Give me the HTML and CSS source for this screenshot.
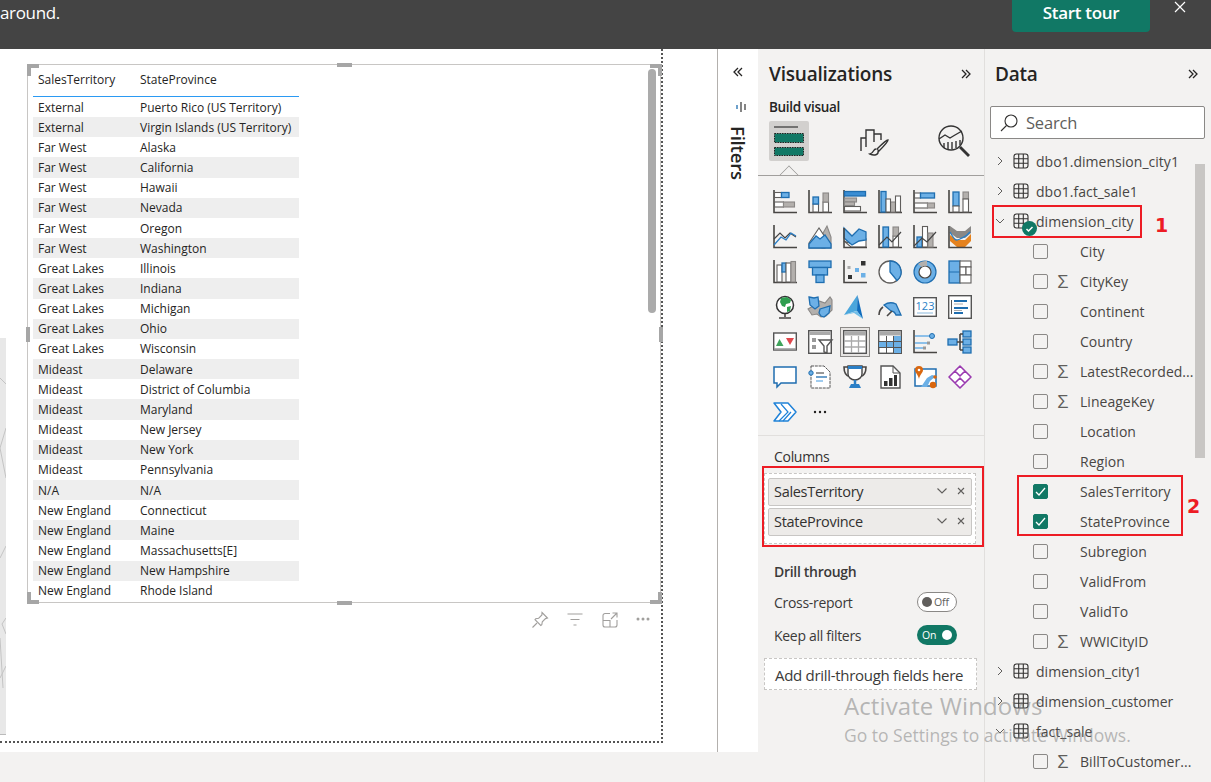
FILE: index.html
```html
<!DOCTYPE html>
<html lang="en">
<head>
<meta charset="utf-8">
<title>Report</title>
<link rel="stylesheet" href="styles.css">
</head>
<body>
<div class="app">
  <header class="banner">
    <span class="banner-text">around.</span>
    <button class="tour">Start tour</button>
    <svg class="banner-x" width="12" height="12" viewBox="0 0 12 12"><path d="M1 1l10 10M11 1L1 11"/></svg>
  </header>
  <div class="main">
    <div class="left">
      <div class="work">
        <div class="canvas-wrap">
          <div class="page">
            <div class="sliver">
              <svg width="6" height="397" viewBox="0 0 6 397"><path d="M0 40l6 6M6 90L0 110l6 30M0 220l6-12M6 280l-4 6 4 10M0 300l3 50M0 340l6-12"/></svg>
            </div>
            <div class="visual">
              <i class="h c-tl"></i><i class="h c-tr"></i><i class="h c-bl"></i><i class="h c-br"></i>
              <i class="h m-t"></i><i class="h m-b"></i><i class="h m-l"></i><i class="h m-r"></i>
              <div class="vscroll"></div>
              <table class="grid">
                <thead><tr><th>SalesTerritory</th><th>StateProvince</th></tr></thead>
                <tbody>
                  <tr><td>External</td><td>Puerto Rico (US Territory)</td></tr>
                  <tr><td>External</td><td>Virgin Islands (US Territory)</td></tr>
                  <tr><td>Far West</td><td>Alaska</td></tr>
                  <tr><td>Far West</td><td>California</td></tr>
                  <tr><td>Far West</td><td>Hawaii</td></tr>
                  <tr><td>Far West</td><td>Nevada</td></tr>
                  <tr><td>Far West</td><td>Oregon</td></tr>
                  <tr><td>Far West</td><td>Washington</td></tr>
                  <tr><td>Great Lakes</td><td>Illinois</td></tr>
                  <tr><td>Great Lakes</td><td>Indiana</td></tr>
                  <tr><td>Great Lakes</td><td>Michigan</td></tr>
                  <tr><td>Great Lakes</td><td>Ohio</td></tr>
                  <tr><td>Great Lakes</td><td>Wisconsin</td></tr>
                  <tr><td>Mideast</td><td>Delaware</td></tr>
                  <tr><td>Mideast</td><td>District of Columbia</td></tr>
                  <tr><td>Mideast</td><td>Maryland</td></tr>
                  <tr><td>Mideast</td><td>New Jersey</td></tr>
                  <tr><td>Mideast</td><td>New York</td></tr>
                  <tr><td>Mideast</td><td>Pennsylvania</td></tr>
                  <tr><td>N/A</td><td>N/A</td></tr>
                  <tr><td>New England</td><td>Connecticut</td></tr>
                  <tr><td>New England</td><td>Maine</td></tr>
                  <tr><td>New England</td><td>Massachusetts[E]</td></tr>
                  <tr><td>New England</td><td>New Hampshire</td></tr>
                  <tr><td>New England</td><td>Rhode Island</td></tr>
                </tbody>
              </table>
            </div>
            <div class="vis-tools">
              <svg width="18" height="18" viewBox="0 0 18 18"><path d="M11 1.500l5.500 5.500-2 .6-3.200 3.200-.5 3-1 .7-5.800-5.800.7-1 3-.5 3.200-3.200zM6 12l-4.500 4.500"/></svg>
              <svg width="18" height="18" viewBox="0 0 18 18"><path d="M1.500 3h15M4.500 8.500h9M7.500 14h3"/></svg>
              <svg width="18" height="18" viewBox="0 0 18 18"><path d="M9 2.500H4a2 2 0 0 0-2 2V14a2 2 0 0 0 2 2h10a2 2 0 0 0 2-2V9M2 9.500h7V16M10 8l6-6M11.500 2H16v4.500"/></svg>
              <svg class="dots" width="14" height="18" viewBox="0 0 14 18"><circle cx="2" cy="8" r="1.500"/><circle cx="7" cy="8" r="1.500"/><circle cx="12" cy="8" r="1.500"/></svg>
            </div>
          </div>
        </div>
        <aside class="filters">
          <svg class="chev" width="12" height="12" viewBox="0 0 12 12"><path d="M6 2L2 6l4 4M10 2L6 6l4 4"/></svg>
          <svg class="filter-ico" width="12" height="12" viewBox="0 0 12 12"><path class="fb" d="M2 4v4"/><path class="fd" d="M6 1v10M10 3v6"/></svg>
          <span class="filters-label">Filters</span>
        </aside>
      </div>
      <div class="status"></div>
    </div>

    <section class="viz">
      <div class="pane-head">
        <h2>Visualizations</h2>
        <svg class="chev" width="12" height="12" viewBox="0 0 12 12"><path d="M2 2l4 4-4 4M6 2l4 4-4 4"/></svg>
      </div>
      <div class="build">Build visual</div>
      <div class="tabs">
        <div class="tab active">
          <svg width="32" height="32" viewBox="0 0 32 32"><path d="M1 2h24" stroke="#333" stroke-width="1.200"/><rect x="1.500" y="8.500" width="29" height="9" fill="#117865" stroke="#222" stroke-dasharray="1.500 1"/><rect x="1.500" y="22.500" width="29" height="8" fill="#117865" stroke="#222" stroke-dasharray="1.500 1"/></svg>
        </div>
        <div class="tab">
          <svg width="32" height="32" viewBox="0 0 32 32" fill="none" stroke="#333" stroke-width="1.400"><path d="M3 26V13h5V5h8v12M16 9h7v6M8 13v9"/><path d="M30 15c-2 0-8 6-11 9l2 2c3-3 9-9 9-11zM18 24c-3 0-2 4-6 5 4 2 9 1 8-3"/></svg>
        </div>
        <div class="tab">
          <svg width="34" height="34" viewBox="0 0 34 34" fill="none" stroke="#333" stroke-width="1.400"><circle cx="14" cy="14" r="12"/><path d="M2 15l6-4 5 3 5-3 7-4M7 19v5M11 18v7M15 18v7M19 17v7M23 16v5"/><path d="M23 23l9 9" stroke-width="2.800"/></svg>
        </div>
      </div>
      <div class="tab-rule"><span class="notch"></span></div>
      <div class="gallery">
        <!-- row 1 -->
        <svg viewBox="0 0 24 24"><path class="ax" d="M1 0v22.500h23"/><rect class="w" x="1.500" y="2.500" width="7" height="5"/><rect class="b" x="8.500" y="2.500" width="7.500" height="5"/><rect class="w" x="1.500" y="12" width="9" height="5"/><rect class="g" x="10.500" y="12" width="11" height="5"/></svg>
        <svg viewBox="0 0 24 24"><path class="ax" d="M1 0v22.500h23"/><rect class="w" x="5" y="14" width="5.500" height="8"/><rect class="b" x="5" y="7" width="5.500" height="7"/><rect class="w" x="15" y="12" width="5.500" height="10"/><rect class="g" x="15" y="3" width="5.500" height="9"/></svg>
        <svg viewBox="0 0 24 24"><path class="ax" d="M1 0v22.500h23"/><rect class="b2" x="1.500" y="1.500" width="21" height="4.500"/><rect class="g" x="1.500" y="8" width="12" height="4"/><rect class="g" x="1.500" y="12" width="10" height="3.500"/><rect class="w" x="1.500" y="16.500" width="16" height="4.500"/></svg>
        <svg viewBox="0 0 24 24"><path class="ax" d="M1 0v22.500h23"/><rect class="b" x="3" y="1.500" width="5" height="20.500"/><rect class="g" x="12.500" y="12" width="5" height="10"/><rect class="w" x="8" y="9" width="4.500" height="13"/><rect class="w" x="17.500" y="6" width="5" height="16"/></svg>
        <svg viewBox="0 0 24 24"><path class="ax" d="M1 0v22.500h23"/><rect class="w" x="1.500" y="3" width="6" height="5"/><rect class="b" x="7.500" y="3" width="14" height="5"/><rect class="w" x="1.500" y="13" width="13" height="5"/><rect class="g" x="14.500" y="13" width="7" height="5"/></svg>
        <svg viewBox="0 0 24 24"><path class="ax" d="M1 0v22.500h23"/><rect class="b" x="5" y="2" width="6" height="14"/><rect class="w" x="5" y="16" width="6" height="6"/><rect class="g" x="15" y="2" width="5.500" height="7"/><rect class="w" x="15" y="9" width="5.500" height="13"/></svg>
        <!-- row 2 -->
        <svg viewBox="0 0 24 24"><path class="ax" d="M1 0v22.500h23"/><path class="ln-d" d="M1 14l6-6 5 5 5-5 6 4"/><path class="ln-b" stroke-width="1.500" d="M1 20l7-8 5 3 5-7 5 3"/></svg>
        <svg viewBox="0 0 24 24"><path class="g" d="M14 23V10l5-9 4 11v11z"/><path class="w" d="M1 18L11 3l6 9v11H1z"/><path class="b" d="M1 23v-4l7-8 4 3 5-4 6 9v4z"/></svg>
        <svg viewBox="0 0 24 24"><path class="w" d="M1 16l7 6h15v-8l-7 1-7 4z"/><path class="b" d="M1 3l8 8 7-7 7 3v8l-7 1-7 4-8-7z"/><path class="ax" d="M1 3v19.500h23"/></svg>
        <svg viewBox="0 0 24 24"><path class="ax" d="M1 0v22.500h23"/><rect class="b" x="5" y="2" width="5.500" height="20"/><rect class="w" x="15" y="11" width="5.500" height="11"/><rect class="g" x="15" y="2" width="5.500" height="9"/><path class="ln-d" d="M1 20l8-8 5 5 9-10"/></svg>
        <svg viewBox="0 0 24 24"><path class="ax" d="M1 0v22.500h23"/><rect class="b" x="4" y="12" width="5" height="10"/><rect class="w" x="9.500" y="1.500" width="5" height="20.500"/><rect class="g" x="15" y="8" width="5" height="14"/><path class="ln-d" d="M1 21l8-8 5 4 9-10"/></svg>
        <svg viewBox="0 0 24 24"><path fill="#8a8886" d="M2 1l7 5h8l6-5v7l-6 5H9L2 8z"/><path fill="#e5821e" d="M2 10l7 5h8l6-6v7l-6 6H9l-7-6z"/><path class="ln-b" stroke-width="3" d="M2 7c5 9 6 9 10 7s6-2 10-7"/><path class="ax" d="M1 1v21.500h23"/></svg>
        <!-- row 3 -->
        <svg viewBox="0 0 24 24"><path class="ax" d="M1 0v22.500h23"/><rect class="w" x="4" y="5" width="5" height="17"/><rect class="b" x="9" y="3" width="4" height="9"/><rect class="w" x="13" y="3" width="5" height="19"/><rect class="g" x="18" y="1.500" width="4.500" height="20.500"/></svg>
        <svg viewBox="0 0 24 24"><rect class="b" x="1" y="1" width="22" height="6.500"/><rect class="b" x="4.500" y="7.500" width="15" height="7.500"/><rect class="b" x="8" y="15" width="8" height="7.500"/></svg>
        <svg viewBox="0 0 24 24"><path class="ax" d="M1 0v22.500h23"/><rect fill="#333" x="18" y="1" width="4.500" height="4.500"/><rect fill="#6cb0e6" x="12" y="8" width="4" height="4"/><rect fill="#aaa" x="4.500" y="6" width="3" height="3"/><rect fill="#6cb0e6" x="18" y="13" width="4.500" height="4.500"/><rect fill="#333" x="5" y="15" width="4" height="4"/></svg>
        <svg viewBox="0 0 24 24"><circle cx="12" cy="12" r="11" fill="#fff" stroke="#605e5c" stroke-width="1.300"/><path class="b" d="M12 12V1a11 11 0 0 1 7 19.500z"/></svg>
        <svg viewBox="0 0 24 24"><circle cx="12" cy="12" r="8.500" fill="none" stroke="#6cb0e6" stroke-width="5"/><circle cx="12" cy="12" r="11" fill="none" stroke="#1f6eb0" stroke-width="1.200"/><circle cx="12" cy="12" r="6" fill="#fff" stroke="#484644" stroke-width="1.200"/><path d="M5 4a11 11 0 0 1 9-3v5a6 6 0 0 0-5 1z" fill="#b3b0ad"/></svg>
        <svg viewBox="0 0 24 24"><rect class="b" x="1" y="1" width="11" height="22"/><path class="b3" d="M1 12h11"/><rect class="w" x="12" y="1" width="11" height="6"/><rect class="w" x="12" y="7" width="6" height="8"/><rect class="w" x="18" y="7" width="5" height="8"/><rect class="w" x="12" y="15" width="11" height="8"/></svg>
        <!-- row 4 -->
        <svg viewBox="0 0 24 24"><circle cx="12" cy="10" r="8.500" fill="#fff" stroke="#333" stroke-width="1.500"/><path fill="#2e9e4f" d="M8 3l6-1 4 3-1 3-4 1-1 3-3-1-2-4zM14 12l4-1-1 5-3 1z"/><path class="ax" d="M12 19v3M6 23h12"/></svg>
        <svg viewBox="0 0 24 24"><path class="g" d="M0 14l7-4 4-4 6 2 5-6 2 3v10l-6 6-5 1-4-3-5 1z"/><path class="b" d="M1 2l5 1 4-1 1 9-4 3-5-4zM12 14l10-3-1 7-5 4-3-1-2-3z"/></svg>
        <svg viewBox="0 0 24 24"><path d="M14.500 0L1 20l9-3 4-1z" fill="#4aa6dc"/><path d="M14.500 0l-.5 16 6 8z" fill="#0f6cbd"/><path d="M1 20l13-4 6 8-9-6z" fill="#70bde8"/></svg>
        <svg viewBox="0 0 24 24"><path class="ax" stroke-width="2" d="M1 20a10 10 0 0 1 4-8"/><path class="b" d="M6 10a12 12 0 0 1 12-1l5 11h-5a6 6 0 0 0-5-4z"/><path class="ax" stroke-width="2.500" d="M9 21l5-5"/></svg>
        <svg viewBox="0 0 24 24"><rect x=".7" y="2.700" width="22.600" height="18.600" fill="#fff" stroke="#555" stroke-width="1.400"/><text x="12" y="15" class="c123">123</text><path d="M4 18h16" stroke="#8ab8dc"/></svg>
        <svg viewBox="0 0 24 24"><rect x=".7" y=".7" width="22.600" height="22.600" fill="#fff" stroke="#555" stroke-width="1.400"/><path d="M6 6h13M6 13h14M6 18h9" stroke="#1f6eb0" stroke-width="1.800"/><path d="M6 9h9M6 15.500h8" stroke="#aaa"/><path d="M3.500 5v14" stroke="#555"/></svg>
        <!-- row 5 -->
        <svg viewBox="0 0 24 24"><rect x=".7" y="3" width="22.600" height="17" fill="#fff" stroke="#555" stroke-width="1.400"/><path d="M6.500 9l4 7H3z" fill="#3fa35b"/><path d="M13 8h8l-4 7z" fill="#e0474c"/><path d="M1 19h22" stroke="#999" stroke-width="1.500"/></svg>
        <svg viewBox="0 0 24 24"><rect x=".7" y=".7" width="22.600" height="22.600" fill="#fff" stroke="#555" stroke-width="1.400"/><path d="M1 3.500h22" stroke="#aaa" stroke-width="3"/><rect x="4" y="8" width="4" height="4" fill="#999"/><rect x="4" y="15" width="4" height="4" fill="#999"/><path d="M11 10h13l-5 6v7l-3-1v-6z" fill="#fff" stroke="#555" stroke-width="1.400"/></svg>
        <span class="sel"><svg viewBox="0 0 24 24"><rect x=".7" y=".7" width="22.600" height="22.600" fill="#fff" stroke="#555" stroke-width="1.400"/><path d="M1 3.500h22" stroke="#aaa" stroke-width="4"/><path d="M1 11h22M1 17h22M8.500 6v17M15.500 6v17" stroke="#aaa" stroke-width="1.300"/></svg></span>
        <svg viewBox="0 0 24 24"><rect x=".7" y=".7" width="22.600" height="22.600" fill="#fff" stroke="#555" stroke-width="1.400"/><path d="M1 3.500h22" stroke="#aaa" stroke-width="4"/><rect x="1" y="12" width="22" height="5" fill="#6cb0e6"/><rect x="16" y="6" width="7" height="17" fill="#6cb0e6"/><path d="M1 11.500h22M1 17.500h22M8.500 6v17M15.500 6v17" stroke="#555"/></svg>
        <svg viewBox="0 0 24 24"><path class="ax" d="M1 0v22.500h23"/><path d="M2 6h16M2 13h12M2 18h8" stroke="#6cb0e6" stroke-width="1.500"/><circle cx="19" cy="6" r="2.500" fill="#6cb0e6" stroke="#1f6eb0"/><rect x="14" y="11.500" width="3" height="3" fill="#999"/><rect x="10" y="16.500" width="3" height="3" fill="#999"/></svg>
        <svg viewBox="0 0 24 24"><rect class="b" x="0" y="9" width="9" height="6"/><rect class="b" x="15" y="1" width="8" height="6"/><rect class="b" x="15" y="9" width="8" height="6"/><rect class="b" x="15" y="17" width="8" height="6"/><path class="ax" d="M9 12h3M12 4v16M12 4h3M12 12h3M12 20h3"/></svg>
        <!-- row 6 -->
        <svg viewBox="0 0 24 24"><path d="M1 2h22v16H8l-4 4v-4H1z" fill="#fff" stroke="#1f6eb0" stroke-width="1.500"/></svg>
        <svg viewBox="0 0 24 24"><path d="M3 1h13l6 6v16H3z" fill="#fff" stroke="#555" stroke-dasharray="3 .8"/><circle cx="3" cy="8" r="2.200" fill="#6cb0e6" stroke="#1f6eb0"/><path d="M8 8h8" stroke="#333"/><path d="M8 12h11" stroke="#1f6eb0" stroke-width="1.300"/><path d="M8 16h7" stroke="#6cb0e6" stroke-width="1.300"/></svg>
        <svg viewBox="0 0 24 24"><path class="ax" stroke-width="1.400" d="M5 2H1c0 6 2 9 6 10M19 2h4c0 6-2 9-6 10"/><path d="M5 1h14v8c0 3-3 6-7 6s-7-3-7-6z" fill="#fff" stroke="#444" stroke-width="1.400"/><path d="M5 1h14v3H5z" fill="#2b7fc6"/><path d="M12 15v4" stroke="#2b7fc6" stroke-width="2.500"/><path d="M6 23l2-4h8l2 4z" fill="#2b7fc6"/></svg>
        <svg viewBox="0 0 24 24"><path d="M3 1h12l7 7v15H3z" fill="#fff" stroke="#555" stroke-width="1.400"/><path d="M15 1v7h7" fill="none" stroke="#555"/><rect x="6" y="16" width="3.500" height="5" fill="#333"/><rect x="11" y="13" width="3.500" height="8" fill="#333"/><rect x="16" y="10" width="3" height="11" fill="#333"/></svg>
        <svg viewBox="0 0 24 24"><path d="M2 4h21v17H2z" fill="#fff" stroke="#1f6eb0" stroke-width="1.500"/><path d="M8 22l6-9 5-3 4 1-6 5-3 6z" fill="#6cb0e6"/><path d="M6 1a4 4 0 0 1 4 4c0 3-3 4-4 9-1-5-4-6-4-9a4 4 0 0 1 4-4z" fill="#d9670f"/><circle cx="6" cy="5" r="1.300" fill="#fff"/><circle cx="20" cy="20" r="3.200" fill="#d9670f"/><circle cx="22" cy="12" r="1.800" fill="#d9670f"/></svg>
        <svg viewBox="0 0 24 24"><path d="M12 1l11 11-11 11L1 12z M7 6l5-5 5 5-5 5z M12 13l5 5-5 5-5-5z" fill="#fff" stroke="#9a3ab0" stroke-width="1.600" stroke-linejoin="round"/></svg>
        <!-- row 7 -->
        <svg viewBox="0 0 24 24"><path d="M1 3h14l8 9-8 9H1l7-9z" fill="#fff" stroke="#1f82d8" stroke-width="1.500" stroke-linejoin="round"/><path d="M6 21L15 12 8 4M10 21l8-9" fill="none" stroke="#1f82d8" stroke-width="1.200"/></svg>
        <svg class="gal-dots" viewBox="0 0 24 24"><circle cx="7" cy="12" r="1.200"/><circle cx="12" cy="12" r="1.200"/><circle cx="17" cy="12" r="1.200"/></svg>
      </div>
      <div class="gal-rule"></div>
      <div class="columns-label">Columns</div>
      <div class="well">
        <div class="pill"><span>SalesTerritory</span><svg class="pc" width="12" height="8" viewBox="0 0 12 8"><path d="M1.500 1.500L6 6l4.500-4.500"/></svg><svg class="px" width="8" height="8" viewBox="0 0 8 8"><path d="M1 1l6 6M7 1L1 7"/></svg></div>
        <div class="pill"><span>StateProvince</span><svg class="pc" width="12" height="8" viewBox="0 0 12 8"><path d="M1.500 1.500L6 6l4.500-4.500"/></svg><svg class="px" width="8" height="8" viewBox="0 0 8 8"><path d="M1 1l6 6M7 1L1 7"/></svg></div>
      </div>
      <div class="drill-title">Drill through</div>
      <div class="opt"><span>Cross-report</span><span class="toggle off"><b></b>Off</span></div>
      <div class="opt"><span>Keep all filters</span><span class="toggle on">On<b></b></span></div>
      <div class="drop">Add drill-through fields here</div>
    </section>

    <section class="data">
      <div class="pane-head">
        <h2>Data</h2>
        <svg class="chev" width="12" height="12" viewBox="0 0 12 12"><path d="M2 2l4 4-4 4M6 2l4 4-4 4"/></svg>
      </div>
      <div class="search">
        <svg width="20" height="20" viewBox="0 0 20 20"><circle cx="12" cy="8" r="6"/><path d="M7.500 12.500L2 18"/></svg>
        <span>Search</span>
      </div>
      <div class="dscroll"></div>
      <div class="tree">
        <div class="t"><svg class="ex" viewBox="0 0 10 10"><path d="M3 1l4 4-4 4"/></svg><svg class="ti" viewBox="0 0 16 16"><rect x="1" y="1" width="14" height="14" rx="2.500"/><path d="M1 5.700h14M1 10.300h14M5.700 1v14M10.300 1v14"/></svg><span>dbo1.dimension_city1</span></div>
        <div class="t"><svg class="ex" viewBox="0 0 10 10"><path d="M3 1l4 4-4 4"/></svg><svg class="ti" viewBox="0 0 16 16"><rect x="1" y="1" width="14" height="14" rx="2.500"/><path d="M1 5.700h14M1 10.300h14M5.700 1v14M10.300 1v14"/></svg><span>dbo1.fact_sale1</span></div>
        <div class="t"><svg class="ex" viewBox="0 0 10 10"><path d="M1 3l4 4 4-4"/></svg><svg class="ti" viewBox="0 0 16 16"><rect x="1" y="1" width="14" height="14" rx="2.500"/><path d="M1 5.700h14M1 10.300h14M5.700 1v14M10.300 1v14"/></svg><svg class="tick" width="15" height="15" viewBox="0 0 15 15"><circle cx="7.500" cy="7.500" r="7.500" fill="#117865"/><path d="M4.500 8l2 2 4-4" fill="none" stroke="#fff" stroke-width="1.500"/></svg><span>dimension_city</span></div>
        <div class="f"><i class="cb"></i><i class="sg"></i><span>City</span></div>
        <div class="f"><i class="cb"></i><i class="sg">Σ</i><span>CityKey</span></div>
        <div class="f"><i class="cb"></i><i class="sg"></i><span>Continent</span></div>
        <div class="f"><i class="cb"></i><i class="sg"></i><span>Country</span></div>
        <div class="f"><i class="cb"></i><i class="sg">Σ</i><span>LatestRecorded...</span></div>
        <div class="f"><i class="cb"></i><i class="sg">Σ</i><span>LineageKey</span></div>
        <div class="f"><i class="cb"></i><i class="sg"></i><span>Location</span></div>
        <div class="f"><i class="cb"></i><i class="sg"></i><span>Region</span></div>
        <div class="f"><i class="cb on"><svg width="11" height="9" viewBox="0 0 11 9"><path d="M1 5l3 3 6-7"/></svg></i><i class="sg"></i><span>SalesTerritory</span></div>
        <div class="f"><i class="cb on"><svg width="11" height="9" viewBox="0 0 11 9"><path d="M1 5l3 3 6-7"/></svg></i><i class="sg"></i><span>StateProvince</span></div>
        <div class="f"><i class="cb"></i><i class="sg"></i><span>Subregion</span></div>
        <div class="f"><i class="cb"></i><i class="sg"></i><span>ValidFrom</span></div>
        <div class="f"><i class="cb"></i><i class="sg"></i><span>ValidTo</span></div>
        <div class="f"><i class="cb"></i><i class="sg">Σ</i><span>WWICityID</span></div>
        <div class="t"><svg class="ex" viewBox="0 0 10 10"><path d="M3 1l4 4-4 4"/></svg><svg class="ti" viewBox="0 0 16 16"><rect x="1" y="1" width="14" height="14" rx="2.500"/><path d="M1 5.700h14M1 10.300h14M5.700 1v14M10.300 1v14"/></svg><span>dimension_city1</span></div>
        <div class="t"><svg class="ex" viewBox="0 0 10 10"><path d="M3 1l4 4-4 4"/></svg><svg class="ti" viewBox="0 0 16 16"><rect x="1" y="1" width="14" height="14" rx="2.500"/><path d="M1 5.700h14M1 10.300h14M5.700 1v14M10.300 1v14"/></svg><span>dimension_customer</span></div>
        <div class="t"><svg class="ex" viewBox="0 0 10 10"><path d="M1 3l4 4 4-4"/></svg><svg class="ti" viewBox="0 0 16 16"><rect x="1" y="1" width="14" height="14" rx="2.500"/><path d="M1 5.700h14M1 10.300h14M5.700 1v14M10.300 1v14"/></svg><span>fact_sale</span></div>
        <div class="f"><i class="cb"></i><i class="sg">Σ</i><span>BillToCustomer...</span></div>
      </div>
    </section>
  </div>

  <div class="mark mark-cols"></div>
  <div class="mark mark-1"></div>
  <div class="mark mark-2"></div>
  <span class="num num-1">1</span>
  <span class="num num-2">2</span>
  <div class="activate">
    <div class="a1">Activate Windows</div>
    <div class="a2">Go to Settings to activate Windows.</div>
  </div>
</div>
</body>
</html>
```
FILE: styles.css
```css
* { box-sizing: border-box; }
html, body { margin: 0; padding: 0; height: 100%; overflow: hidden; }
body { font-family: "Open Sans", "Noto Sans", sans-serif; color: #252423; background: #fff; }
.app { position: relative; width: 1211px; height: 782px; overflow: hidden; display: flex; flex-direction: column; }

/* banner */
.banner { height: 49px; flex: none; background: #444; display: flex; align-items: flex-start; color: #fff; position: relative; }
.banner-text { font-size: 17px; line-height: 26px; letter-spacing: -.35px; flex: 1; }
.tour { width: 138px; height: 32px; margin-right: 61px; border: 0; border-radius: 0 0 4px 4px; background: #117865; color: #fff; font: 600 17px/26px "Open Sans", sans-serif; letter-spacing: -.3px; padding: 0 0 6px; }
.banner-x { position: absolute; right: 25px; top: 1px; }
.banner-x path { stroke: #fff; stroke-width: 1.200; fill: none; }

.main { flex: 1; display: flex; min-height: 0; }
.left { width: 758px; flex: none; display: flex; flex-direction: column; }
.work { flex: 1; display: flex; background: #fff; }
.status { height: 30px; flex: none; background: #f3f2f1; }

/* canvas */
.canvas-wrap { width: 718px; flex: none; border-right: 1px solid #b3b0ad; height: 703px; }
.page { position: relative; width: 663px; height: 694px; border-right: 2px dotted #555; border-bottom: 2px dotted #555; padding: 15px 0 0 27px; }
.sliver { position: absolute; left: 0; top: 289px; width: 6px; height: 397px; background: #e8e8e8; border-bottom: 1px solid #bbb; }
.sliver svg { display: block; fill: none; stroke: #c4c4c4; }
.visual { position: relative; width: 634px; height: 539px; border: 1px solid #c8c6c4; padding: 5px 0 0 5px; }
.h { position: absolute; background: #a6a6a6; display: block; }
.c-tl { left: -1px; top: -1px; width: 12px; height: 4px; }
.c-tl::after, .c-tr::after, .c-bl::after, .c-br::after { content: ""; position: absolute; width: 4px; height: 12px; background: #a6a6a6; }
.c-tl::after { left: 0; top: 0; }
.c-tr { right: -2px; top: -1px; width: 12px; height: 4px; }
.c-tr::after { right: 0; top: 0; }
.c-bl { left: -1px; bottom: -2px; width: 12px; height: 4px; }
.c-bl::after { left: 0; bottom: 0; }
.c-br { right: -2px; bottom: -2px; width: 12px; height: 4px; }
.c-br::after { right: 0; bottom: 0; }
.m-t { left: 309px; top: -2px; width: 15px; height: 4px; }
.m-b { left: 309px; bottom: -3px; width: 15px; height: 4px; }
.m-l { left: -2px; top: 262px; width: 4px; height: 15px; }
.m-r { right: -3px; top: 262px; width: 4px; height: 15px; }
.vscroll { position: absolute; right: 4px; top: 4px; width: 8px; height: 244px; border-radius: 4px; background: #ababab; }

.grid { border-collapse: separate; border-spacing: 0; table-layout: fixed; width: 266px; font-size: 12px; letter-spacing: -.01px; color: #252423; }
.grid th { font-weight: 400; text-align: left; height: 27px; padding: 0 0 8px 5px; border-bottom: 1px solid #2b9af3; overflow: hidden; white-space: nowrap; }
.grid th:first-child, .grid td:first-child { width: 102px; }
.grid td { height: 20.170px; padding: 1px 0 0 5px; white-space: nowrap; overflow: hidden; line-height: 18px; }
.grid tbody tr:nth-child(even) td { background: #eee; }

.vis-tools { display: flex; align-items: center; gap: 17px; margin: 7px 0 0 504px; height: 20px; }
.vis-tools svg { fill: none; stroke: #a19f9d; stroke-width: 1.100; flex: none; }
.vis-tools .dots { fill: #a19f9d; stroke: none; }

/* filters */
.filters { flex: 1; display: flex; flex-direction: column; align-items: center; height: 703px; padding-top: 17px; }
.chev { flex: none; }
.chev path { fill: none; stroke: #252423; stroke-width: 1.300; }
.filter-ico { margin: 23px 0 0 5px; flex: none; }
.filter-ico path { fill: none; stroke-width: 1.300; }
.filter-ico .fb { stroke: #1f6eb0; }
.filter-ico .fd { stroke: #444; }
.filters-label { writing-mode: vertical-rl; font-size: 18.500px; font-weight: 600; letter-spacing: -.2px; margin-top: 13px; line-height: 20px; }

/* viz */
.viz { width: 227px; flex: none; background: #f3f2f1; border-right: 1px solid #e1dfdd; position: relative; }
.pane-head { height: 50px; display: flex; align-items: center; justify-content: space-between; padding: 0 12px 0 11px; }
.pane-head h2 { margin: 0; font-size: 19px; font-weight: 600; letter-spacing: -.2px; }
.build { font-size: 13.500px; font-weight: 600; letter-spacing: -.3px; line-height: 18px; margin: -1px 0 0 11px; }
.tabs { display: flex; padding: 0 0 0 11px; margin-top: 5px; height: 40px; }
.tab { width: 40px; height: 40px; display: flex; align-items: center; justify-content: center; border-radius: 2px; }
.tab:nth-child(2) { margin-left: 45px; }
.tab:nth-child(3) { margin-left: 40px; }
.tab.active { background: #d2d0ce; }
.tab-rule { height: 15px; border-bottom: 1px solid #a19f9d; position: relative; }
.notch { position: absolute; left: 24px; bottom: -7px; width: 14px; height: 14px; background: #f3f2f1; border-left: 1px solid #a19f9d; border-top: 1px solid #a19f9d; transform: rotate(45deg); clip-path: polygon(0 0, 100% 0, 0 100%); }
.gallery { display: grid; grid-template-columns: repeat(6, 35px); grid-auto-rows: 35px; justify-items: center; align-items: center; padding: 8px 0 0 9px; height: 259px; }
.gallery svg { width: 24px; height: 24px; overflow: visible; display: block; }
.sel { width: 30px; height: 30px; display: flex; align-items: center; justify-content: center; background: #e6e4e2; border: 1px solid #8a8886; }
.gal-dots { fill: #201f1e; }
.ax { fill: none; stroke: #484644; stroke-width: 1.600; }
.w { fill: #fff; stroke: #605e5c; stroke-width: 1.100; }
.g { fill: #b3b0ad; stroke: #8a8886; stroke-width: 1.100; }
.b { fill: #6cb0e6; stroke: #1f6eb0; stroke-width: 1.300; }
.b2 { fill: #3a8ed4; stroke: #1f6eb0; stroke-width: 1.300; }
.b3 { stroke: #1f6eb0; }
.ln-d { fill: none; stroke: #444; stroke-width: 1.200; }
.ln-b { fill: none; stroke: #2b7fc6; stroke-width: 1.300; }
.c123 { font-size: 11px; fill: #2b7fc6; text-anchor: middle; font-family: "Open Sans", sans-serif; }
.gal-rule { border-top: 1px solid #e1dfdd; }
.columns-label { font-size: 14px; letter-spacing: -.3px; line-height: 20px; margin: 11px 0 0 16px; color: #323130; }
.well { margin: 6px 8px 0 6px; height: 71px; border: 1px dashed #c8c6c4; background: #fff; padding: 4px 3px 0 3px; }
.pill { height: 28px; margin-bottom: 2px; background: #edebe9; border: 1px solid #c8c6c4; border-radius: 2px; display: flex; align-items: center; padding: 0 6px 2px 5px; font-size: 14.500px; letter-spacing: -.3px; color: #323130; }
.pill span { flex: 1; }
.pc path, .px path { fill: none; stroke: #605e5c; stroke-width: 1.100; }
.px { margin-left: 9px; }
.drill-title { font-size: 14px; font-weight: 600; letter-spacing: -.3px; line-height: 20px; margin: 18px 0 0 16px; color: #3b3a39; }
.opt { display: flex; justify-content: space-between; align-items: center; font-size: 14px; letter-spacing: -.3px; height: 20px; margin: 10px 27px 0 16px; color: #3b3a39; }
.opt + .opt { margin-top: 13px; }
.toggle { width: 40px; height: 20px; border-radius: 10px; display: flex; align-items: center; font-size: 10.500px; letter-spacing: -.1px; gap: 2px; padding: 0 4px; }
.toggle b { width: 10px; height: 10px; border-radius: 50%; display: block; flex: none; }
.toggle.off { background: #fff; border: 1px solid #8a8886; color: #605e5c; }
.toggle.off b { background: #605e5c; }
.toggle.on { background: #117865; color: #fff; justify-content: space-between; padding: 0 5px; }
.toggle.on b { background: #fff; }
.drop { margin: 13px 7px 0 6px; height: 32px; background: #fff; border: 1px dashed #c8c6c4; font-size: 15px; letter-spacing: -.3px; line-height: 32px; padding-left: 10px; color: #3b3a39; white-space: nowrap; }

/* data */
.data { flex: 1; background: #f3f2f1; position: relative; min-width: 0; overflow: hidden; }
.data .pane-head { padding-left: 10px; }
.search { margin: 7px 6px 0 5px; height: 33px; background: #fff; border: 1px solid #8a8886; border-radius: 2px; display: flex; align-items: center; gap: 7px; padding-left: 8px; font-size: 16.500px; letter-spacing: -.2px; color: #605e5c; }
.search svg { fill: none; stroke: #323130; stroke-width: 1.100; }
.dscroll { position: absolute; left: 210px; top: 115px; width: 10px; height: 294px; background: #c8c6c4; }
.tree { margin-top: 7px; font-size: 14px; letter-spacing: .03px; color: #484644; white-space: nowrap; }
.t, .f { height: 30px; display: flex; align-items: center; position: relative; }
.t { padding-left: 10px; }
.ex { width: 10px; height: 10px; flex: none; }
.ex path { fill: none; stroke: #605e5c; stroke-width: 1; }
.ti { width: 16px; height: 16px; margin-left: 8px; flex: none; }
.ti rect, .ti path { fill: none; stroke: #323130; stroke-width: 1.100; }
.t span { margin-left: 7px; }
.tick { position: absolute; left: 37px; top: 15px; }
.f { padding-left: 48px; }
.cb { width: 15px; height: 15px; border: 1px solid #8a8886; border-radius: 2px; flex: none; background: #f3f2f1; display: flex; align-items: center; justify-content: center; }
.cb.on { background: #117865; border-color: #117865; }
.cb svg { fill: none; stroke: #fff; stroke-width: 1.300; }
.sg { width: 32px; flex: none; font-style: normal; text-align: center; font-size: 19px; line-height: 20px; color: #605e5c; padding-right: 2px; }

/* annotations */
.mark { position: absolute; border: 2px solid #ed1c24; pointer-events: none; }
.mark-cols { left: 762px; top: 466px; width: 222px; height: 81px; }
.mark-1 { left: 992px; top: 205px; width: 150px; height: 33px; }
.mark-2 { left: 1017px; top: 475px; width: 166px; height: 61px; }
.num { position: absolute; color: #ed1c24; font: 700 19px/20px "DejaVu Sans", sans-serif; }
.num-1 { left: 1155px; top: 215px; }
.num-2 { left: 1187px; top: 496px; }

.activate { position: absolute; left: 844px; top: 690px; color: rgba(120, 120, 120, .5); pointer-events: none; white-space: nowrap; }
.a1 { font-size: 24px; letter-spacing: .1px; line-height: 32px; }
.a2 { font-size: 17.500px; letter-spacing: 0; line-height: 24px; margin-top: 1px; }
```
